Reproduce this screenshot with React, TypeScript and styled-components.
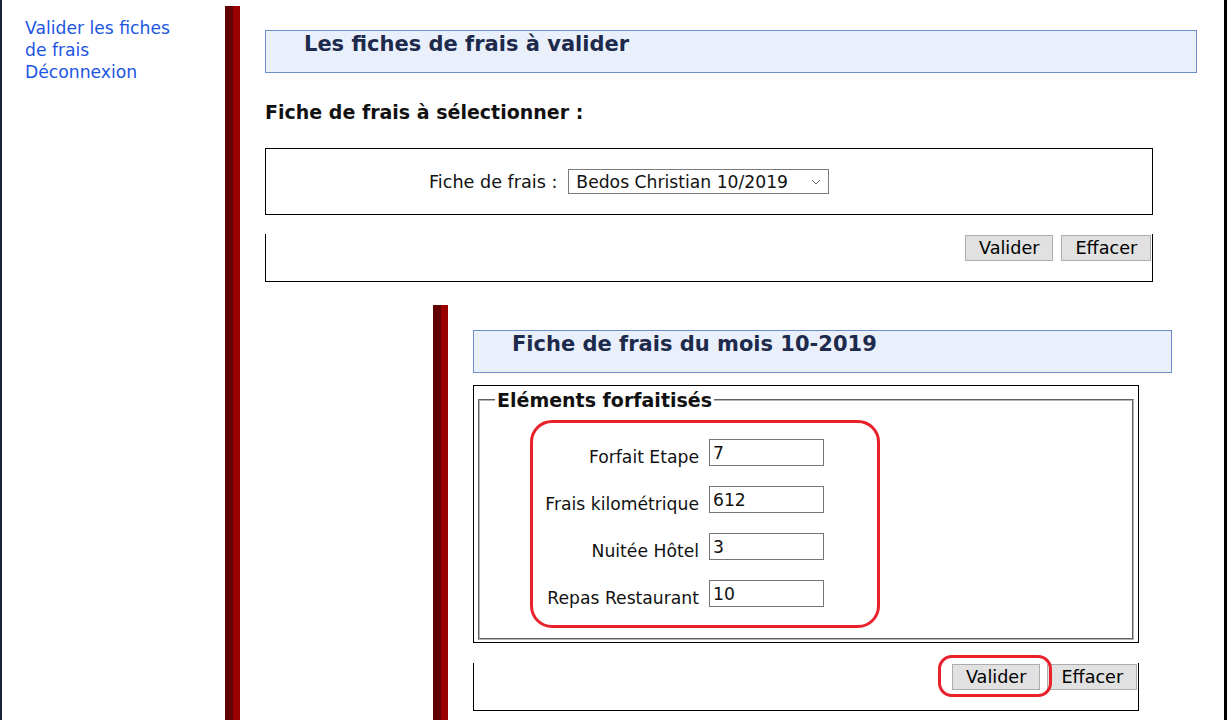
import styled, { createGlobalStyle } from 'styled-components';

const GlobalStyle = createGlobalStyle`
  html, body {
    margin: 0;
    padding: 0;
    background: #fff;
    overflow: hidden;
  }
  body {
    font-family: 'DejaVu Sans', 'Noto Sans', sans-serif;
    color: #111;
  }
`;

const Page = styled.div`
  display: flex;
  width: 1227px;
  height: 720px;
  box-sizing: border-box;
  border-left: 2px solid #1a2238;
  border-right: 3px solid #000;
  overflow: hidden;
  background: #fff;
`;

const Menu = styled.nav`
  flex: none;
  width: 223px;
  box-sizing: border-box;
  padding: 17px 40px 0 23px;
`;

const MenuLink = styled.a`
  display: block;
  color: #1d55e3;
  font-size: 17.2px;
  line-height: 22px;
  text-decoration: none;
  cursor: pointer;
`;

// colonne avec la double barre rouge à gauche
const Section = styled.section<{ $nested?: boolean }>`
  flex: 1;
  min-width: 0;
  box-sizing: border-box;
  background: linear-gradient(to right, #600000 0 8px, #990000 8px 15px, transparent 15px);
  margin: ${(p) => (p.$nested ? '23px 0 0 168px' : '6px 0 0 0')};
  padding: ${(p) => (p.$nested ? '25px 25px 0 40px' : '24px 27px 0 40px')};
  min-height: ${(p) => (p.$nested ? '420px' : '714px')};
`;

const Title = styled.h2`
  margin: 0;
  height: 43px;
  box-sizing: border-box;
  background: #e9f0fc;
  border: 1px solid #6d8ecb;
  padding: 1px 0 0 38px;
  font-size: 21px;
  line-height: 24px;
  font-weight: bold;
  color: #1d2a4b;
`;

const SubTitle = styled.h3`
  margin: 27px 0 0;
  font-size: 19px;
  line-height: 24px;
  font-weight: bold;
  color: #111;
`;

const Box = styled.div<{ $open?: boolean }>`
  width: 95.3%;
  box-sizing: border-box;
  border: 1px solid #000;
  ${(p) => p.$open && 'border-top: none;'}
`;

const SelectBox = styled(Box)`
  margin-top: 24px;
  height: 67px;
  display: flex;
  align-items: center;
  gap: 11px;
  padding-left: 163px;
`;

const ButtonBar = styled(Box)<{ $gap: number; $top: number }>`
  margin-top: ${(p) => p.$top}px;
  height: 48px;
  display: flex;
  justify-content: flex-end;
  align-items: flex-start;
  gap: ${(p) => p.$gap}px;
  padding: 1px 1px 0 0;
`;

const Label = styled.label<{ $size?: number }>`
  font-size: ${(p) => p.$size ?? 17.6}px;
  line-height: 22px;
  color: #111;
  white-space: nowrap;
`;

const SelectWrap = styled.div`
  position: relative;
  display: flex;
`;

const Select = styled.select`
  appearance: none;
  width: 261px;
  height: 25px;
  box-sizing: border-box;
  border: 1px solid #7a7a7a;
  border-radius: 0;
  background: #fff;
  padding: 0 0 0 7px;
  font-family: 'DejaVu Sans', sans-serif;
  font-size: 17.2px;
  color: #111;
`;

const Chevron = styled.svg`
  position: absolute;
  right: 8px;
  top: 10px;
  pointer-events: none;
`;

const Button = styled.button`
  height: 26px;
  box-sizing: border-box;
  padding: 0 13px;
  background: #e1e1e1;
  border: 1px solid #adadad;
  border-radius: 0;
  font-family: 'DejaVu Sans', sans-serif;
  font-size: 17.6px;
  line-height: 24px;
  color: #000;
  cursor: pointer;
`;

const FormBox = styled(Box)`
  margin-top: 12px;
  padding: 3px 4px 2px;
`;

const Fieldset = styled.fieldset`
  margin: 0;
  padding: 0 0 10px;
  border: 2px groove #b4b4b4;
  min-width: 0;
`;

const Legend = styled.legend`
  margin-left: 15px;
  padding: 0 2px;
  font-size: 19px;
  line-height: 22px;
  font-weight: bold;
  color: #111;
`;

const Highlight = styled.div`
  margin: 9px 0 0 50px;
  width: 350px;
  box-sizing: border-box;
  border: 3px solid #e8212b;
  border-radius: 22px;
  padding: 16px 0 18px 10px;
  display: grid;
  grid-template-columns: 156px 115px;
  column-gap: 10px;
  row-gap: 20px;
  align-items: end;
`;

const RowLabel = styled(Label)`
  text-align: right;
  margin-bottom: -2px;
`;

const Input = styled.input`
  width: 115px;
  height: 27px;
  box-sizing: border-box;
  border: 1px solid #767676;
  padding: 0 3px;
  font-family: 'DejaVu Sans', sans-serif;
  font-size: 17.2px;
  color: #111;
`;

const RingWrap = styled.span`
  position: relative;
  display: inline-flex;
`;

const Ring = styled.span`
  position: absolute;
  left: -14px;
  top: -9px;
  right: -12px;
  bottom: -7px;
  border: 3px solid #e8212b;
  border-radius: 14px;
  pointer-events: none;
  z-index: 1;
`;

const forfaits = [
  { id: 'ETP', libelle: 'Forfait Etape', qte: '7' },
  { id: 'KM', libelle: 'Frais kilométrique', qte: '612' },
  { id: 'NUI', libelle: 'Nuitée Hôtel', qte: '3' },
  { id: 'REP', libelle: 'Repas Restaurant', qte: '10' },
];

const App = () => {
  return (
    <>
      <GlobalStyle />
      <Page>
        <Menu>
          <MenuLink>Valider les fiches de frais</MenuLink>
          <MenuLink>Déconnexion</MenuLink>
        </Menu>

        <Section>
          <Title>Les fiches de frais à valider</Title>
          <SubTitle>Fiche de frais à sélectionner :</SubTitle>

          <SelectBox>
            <Label htmlFor='lstFiche'>Fiche de frais :</Label>
            <SelectWrap>
              <Select id='lstFiche' defaultValue='bc-102019'>
                <option value='bc-102019'>Bedos Christian 10/2019</option>
              </Select>
              <Chevron width='10' height='6' viewBox='0 0 10 6'>
                <path d='M1 1l4 4 4-4' fill='none' stroke='#6b6b6b' strokeWidth='1' />
              </Chevron>
            </SelectWrap>
          </SelectBox>
          <ButtonBar $open $gap={8} $top={19}>
            <Button>Valider</Button>
            <Button>Effacer</Button>
          </ButtonBar>

          <Section $nested>
            <Title>Fiche de frais du mois 10-2019</Title>
            <FormBox>
              <Fieldset>
                <Legend>Eléments forfaitisés</Legend>
                <Highlight>
                  {forfaits.map((f) => [
                    <RowLabel key={f.id + '-l'} htmlFor={f.id} $size={17.2}>
                      {f.libelle}
                    </RowLabel>,
                    <Input key={f.id} id={f.id} defaultValue={f.qte} />,
                  ])}
                </Highlight>
              </Fieldset>
            </FormBox>
            <ButtonBar $open $gap={7} $top={20}>
              <RingWrap>
                <Button>Valider</Button>
                <Ring />
              </RingWrap>
              <Button>Effacer</Button>
            </ButtonBar>
          </Section>
        </Section>
      </Page>
    </>
  );
};

export default App;
